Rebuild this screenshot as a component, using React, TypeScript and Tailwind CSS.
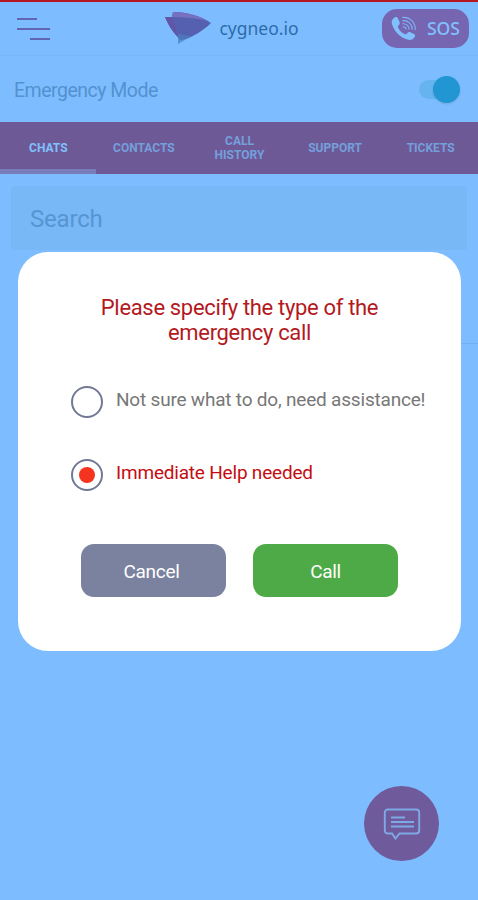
import { useState } from "react";

const tabs = ["CHATS", "CONTACTS", "CALL HISTORY", "SUPPORT", "TICKETS"];

const options = [
  { id: "assist", label: "Not sure what to do, need assistance!" },
  { id: "immediate", label: "Immediate Help needed" },
];

function Logo() {
  return (
    <svg width="46" height="33" viewBox="0 0 46 33" fill="none">
      <path d="M13 20L28 24C23 26 18 29 13 32Z" fill="#5395d1" />
      <path d="M8 0C22 0 36 4 46 11C38 19 28 25 16 28C9 22 4 14 0 5L7 5Z" fill="#5560b0" />
      <path d="M8 0C20 0 33 3 43 9C31 6 20 5 7 5Z" fill="#7770c0" />
      <path d="M0 5L7 5L13 25C8 20 3 13 0 5Z" fill="#6255a5" />
      <path d="M13 22L27 24.500L16 28L13 26Z" fill="#4f76bb" />
    </svg>
  );
}

function PhoneIcon() {
  return (
    <svg width="26" height="26" viewBox="0 0 26 26" fill="none">
      <path
        d="M3.6 1.6C5 .6 6.200 1.200 6.900 2.600L8.500 6.100C9.100 7.400 8.800 8.300 7.700 9.200C6.700 10 6.700 10.800 7.300 12C8.800 14.800 10.900 16.900 13.600 18C14.700 18.500 15.500 18.300 16.200 17.300C17 16 18 15.700 19.300 16.300L23 18C24.300 18.600 24.500 19.800 23.700 21C22.100 23.500 19.500 24.600 16.500 23.600C8.700 21 3.200 15.300 1 8.200C.1 5.300 1.300 3.200 3.600 1.600Z"
        fill="#80c0fd"
      />
      <g stroke="#80b6f5" strokeWidth="1.100" strokeLinecap="round">
        <path d="M11.500 1.500C18.500 .5 24.500 6 24.200 13.500" />
        <path d="M11.700 4.700C17 4.300 21.300 8.300 21.100 13.200" />
        <path d="M11.900 7.800C15.200 7.600 18 10 18 13" />
        <path d="M12.200 10.700C13.800 10.700 14.900 11.700 15 13" />
      </g>
    </svg>
  );
}

function ChatIcon() {
  return (
    <svg width="38" height="32" viewBox="0 0 38 32" fill="none" stroke="#7fa9e6" strokeWidth="1.900">
      <path d="M5 1.500H33C35 1.500 36.200 2.700 36.200 4.700V22.500C36.200 24.400 35 25.500 33 25.500H16.500L12.500 30.500L9 25.500H5C3 25.500 1.800 24.400 1.800 22.500V4.700C1.800 2.700 3 1.500 5 1.500Z" />
      <path d="M8 9.500H22M8 14H31M8 18.500H31" />
    </svg>
  );
}

export default function App() {
  const [emergency, setEmergency] = useState(true);
  const [activeTab, setActiveTab] = useState("CHATS");
  const [selected, setSelected] = useState("immediate");

  return (
    <div className="relative h-[900px] w-[478px] overflow-hidden bg-[#7dbdff] font-['Roboto',sans-serif]">
      <header className="flex h-14 items-center justify-between border-t-[2.5px] border-b border-t-[#b5181f] border-b-[#77b6f8] pr-[9px] pl-[17px]">
        <button className="flex w-[33px] flex-col gap-2">
          <span className="h-0.5 w-5 bg-[#6265b4]" />
          <span className="h-0.5 w-full bg-[#6265b4]" />
          <span className="h-0.5 w-5 self-end bg-[#6265b4]" />
        </button>
        <div className="ml-[32px] flex items-center gap-2">
          <Logo />
          <span className="font-['Noto_Sans',sans-serif] text-[17.5px] text-[#2f6ba9]">cygneo.io</span>
        </div>
        <button className="flex h-[39px] w-[87px] items-center gap-2.5 rounded-[15px] bg-[#7666b2] pl-[9px]">
          <PhoneIcon />
          <span className="font-['Noto_Sans',sans-serif] text-[17.5px] font-medium text-[#80c0fd]">SOS</span>
        </button>
      </header>

      <div className="flex h-[66px] items-center justify-between pr-[17px] pl-3.5">
        <span className="pt-[3px] text-[19.500px] tracking-[-0.5px] text-[#5391cf]">Emergency Mode</span>
        <button onClick={() => setEmergency(!emergency)} className="flex h-[27px] w-[42px] items-center">
          <span
            className={`flex h-[19px] w-[41px] items-center rounded-full bg-[#66b4ef] ${emergency ? "justify-end" : "justify-start"}`}
          >
            <span className="size-[27px] shrink-0 rounded-full bg-[#2196d2] shadow-sm" />
          </span>
        </button>
      </div>

      <nav className="flex h-[52px] bg-[#6e5997]">
        {tabs.map((tab) => (
          <button
            key={tab}
            onClick={() => setActiveTab(tab)}
            className={`flex flex-1 items-center justify-center border-b-[5px] pt-[5px] pr-[15px] pl-4 text-center text-[12px] leading-[14px] font-bold ${
              activeTab === tab ? "border-[#797db9] text-[#80c0fc]" : "border-transparent text-[#749fdb]"
            }`}
          >
            {tab}
          </button>
        ))}
      </nav>

      <div className="px-[11px] pt-3">
        <div className="flex h-16 items-center rounded-sm bg-[#78b8f6] px-[19px] pt-px text-[24px] tracking-[-0.2px] text-[#5795d2]">
          Search
        </div>
      </div>
      <div className="ml-24 h-[94px] border-b border-[#72b0f0]" />

      <div className="absolute top-[252px] left-[18px] flex h-[399px] w-[443px] flex-col rounded-[30px] bg-white px-[53px] pt-[43px]">
        <h2 className="text-center text-[22px] leading-[25px] tracking-[-0.33px] text-[#b3191e]">
          Please specify the type of the
          <br />
          emergency call
        </h2>
        <div className="mt-[41px] flex flex-col gap-[41px]">
          {options.map((option) => (
            <button
              key={option.id}
              onClick={() => setSelected(option.id)}
              className="flex h-8 items-center gap-[13px] text-left"
            >
              <span className="flex size-8 shrink-0 items-center justify-center rounded-full border-2 border-[#727995]">
                {selected === option.id && <span className="size-4 rounded-full bg-[#f5341f]" />}
              </span>
              <span
                className={`pb-[3px] text-[19px] tracking-[-0.2px] whitespace-nowrap ${
                  selected === option.id ? "text-[#c40d12]" : "text-[#777777]"
                }`}
              >
                {option.label}
              </span>
            </button>
          ))}
        </div>
        <div className="mt-[53px] ml-[10px] flex gap-[27px] text-[19px] tracking-[-0.3px] text-white">
          <button className="h-[53px] w-[145px] rounded-[13px] bg-[#7a829f] pt-[3px] pr-1">Cancel</button>
          <button className="h-[53px] w-[145px] rounded-[13px] bg-[#4daa46] pt-[3px]">Call</button>
        </div>
      </div>

      <button className="absolute top-[786px] left-[364px] flex size-[75px] items-center justify-center rounded-full bg-[#6f5a9b]">
        <ChatIcon />
      </button>
    </div>
  );
}
